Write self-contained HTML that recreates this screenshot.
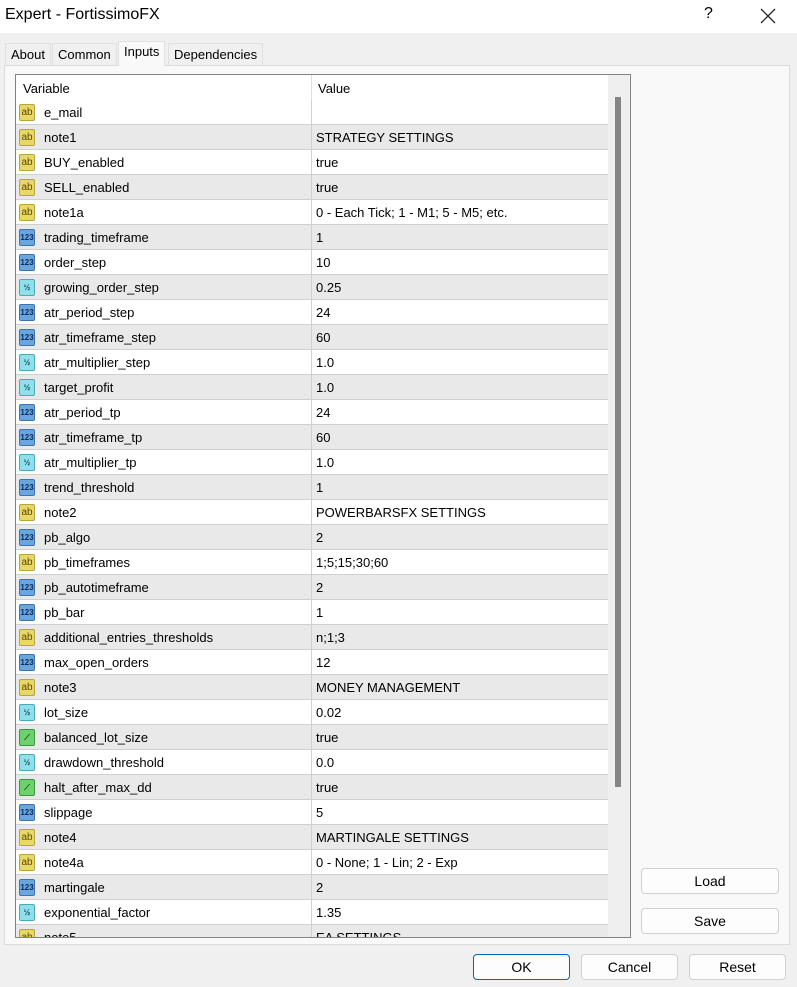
<!DOCTYPE html>
<html><head><meta charset="utf-8"><style>
*{box-sizing:border-box;margin:0;padding:0}
body{width:797px;height:987px;background:#f0f0f0;font-family:"Liberation Sans",Arial,sans-serif;position:relative;overflow:hidden;color:#000}
.title{position:absolute;left:0;top:0;width:797px;height:33px;background:#fff}
.title .t{position:absolute;left:5px;top:6px;font-size:16px}
.title .q{position:absolute;left:704px;top:5px;font-size:16px}
.title .x{position:absolute;left:760px;top:8px}
.tab{position:absolute;top:43px;height:22px;font-size:13px;padding:3px 5px;background:#f0f0f0;border:1px solid #e0e0e0;border-bottom:none}
.tab.a{top:41px;height:25px;background:#f9f9f9;padding-top:2px}
.panel{position:absolute;left:4px;top:65px;width:786px;height:880px;background:#f9f9f9;border:1px solid #dcdcdc}
.tbl{position:absolute;left:15px;top:74px;width:616px;height:864px;border:1px solid #828282;background:#fff;overflow:hidden}
.hdr{position:absolute;left:0;top:0;width:592px;height:25px;background:#fff;font-size:13px}
.hdr span{position:absolute;top:6px}
.row{position:absolute;left:0;width:592px;height:25px;border-bottom:1px solid #d0d0d0;font-size:13px}
.row.g{background:#e9e9e9}
.row .n{position:absolute;left:28px;top:5px}
.row .v{position:absolute;left:300px;top:5px}
.row .d{position:absolute;left:295px;top:0;height:25px;border-left:1px solid #d0d0d0}
.ic{position:absolute;left:3px;top:4px;width:16px;height:17px;border-radius:2px;font-size:8px;font-weight:bold;text-align:center;line-height:15px}
.ab{background:#e8d867;border:1px solid #b8a53a;color:#5a4a00;font-size:10px;font-weight:normal}
.n1{background:#6aa6de;border:1px solid #3b73b3;color:#0b2b5e}
.hf{background:#8fe0ea;border:1px solid #4aaabb;color:#134d5c}
.bo{background:#6fd06f;border:1px solid #3a9a3a;color:#0b4a0b}
.sb{position:absolute;left:592px;top:0;width:22px;height:864px;background:#efefef}
.th{position:absolute;left:7px;top:22px;width:6px;height:690px;background:#858585}
.btn{position:absolute;height:26px;border:1px solid #d0d0d0;border-radius:4px;background:#fdfdfd;font-size:14px;text-align:center;line-height:24px}
</style></head><body>
<div class="title"><span class="t">Expert - FortissimoFX</span><span class="q">?</span>
<svg class="x" width="16" height="16" viewBox="0 0 16 16"><path d="M1 1L15 15M15 1L1 15" stroke="#222" stroke-width="1.3"/></svg></div>
<div class="panel"></div>
<div class="tab" style="left:5px">About</div>
<div class="tab" style="left:52px">Common</div>
<div class="tab a" style="left:118px">Inputs</div>
<div class="tab" style="left:168px">Dependencies</div>
<div class="tbl">
<div class="hdr"><span style="left:7px">Variable</span><span style="left:302px">Value</span><div style="position:absolute;left:295px;top:0;height:25px;border-left:1px solid #e0e0e0"></div></div>
<div class="row" style="top:25px"><div class="ic ab">ab</div><span class="n">e_mail</span><div class="d"></div><span class="v"></span></div>
<div class="row g" style="top:50px"><div class="ic ab">ab</div><span class="n">note1</span><div class="d"></div><span class="v">STRATEGY SETTINGS</span></div>
<div class="row" style="top:75px"><div class="ic ab">ab</div><span class="n">BUY_enabled</span><div class="d"></div><span class="v">true</span></div>
<div class="row g" style="top:100px"><div class="ic ab">ab</div><span class="n">SELL_enabled</span><div class="d"></div><span class="v">true</span></div>
<div class="row" style="top:125px"><div class="ic ab">ab</div><span class="n">note1a</span><div class="d"></div><span class="v">0 - Each Tick; 1 - M1; 5 - M5; etc.</span></div>
<div class="row g" style="top:150px"><div class="ic n1">123</div><span class="n">trading_timeframe</span><div class="d"></div><span class="v">1</span></div>
<div class="row" style="top:175px"><div class="ic n1">123</div><span class="n">order_step</span><div class="d"></div><span class="v">10</span></div>
<div class="row g" style="top:200px"><div class="ic hf">½</div><span class="n">growing_order_step</span><div class="d"></div><span class="v">0.25</span></div>
<div class="row" style="top:225px"><div class="ic n1">123</div><span class="n">atr_period_step</span><div class="d"></div><span class="v">24</span></div>
<div class="row g" style="top:250px"><div class="ic n1">123</div><span class="n">atr_timeframe_step</span><div class="d"></div><span class="v">60</span></div>
<div class="row" style="top:275px"><div class="ic hf">½</div><span class="n">atr_multiplier_step</span><div class="d"></div><span class="v">1.0</span></div>
<div class="row g" style="top:300px"><div class="ic hf">½</div><span class="n">target_profit</span><div class="d"></div><span class="v">1.0</span></div>
<div class="row" style="top:325px"><div class="ic n1">123</div><span class="n">atr_period_tp</span><div class="d"></div><span class="v">24</span></div>
<div class="row g" style="top:350px"><div class="ic n1">123</div><span class="n">atr_timeframe_tp</span><div class="d"></div><span class="v">60</span></div>
<div class="row" style="top:375px"><div class="ic hf">½</div><span class="n">atr_multiplier_tp</span><div class="d"></div><span class="v">1.0</span></div>
<div class="row g" style="top:400px"><div class="ic n1">123</div><span class="n">trend_threshold</span><div class="d"></div><span class="v">1</span></div>
<div class="row" style="top:425px"><div class="ic ab">ab</div><span class="n">note2</span><div class="d"></div><span class="v">POWERBARSFX SETTINGS</span></div>
<div class="row g" style="top:450px"><div class="ic n1">123</div><span class="n">pb_algo</span><div class="d"></div><span class="v">2</span></div>
<div class="row" style="top:475px"><div class="ic ab">ab</div><span class="n">pb_timeframes</span><div class="d"></div><span class="v">1;5;15;30;60</span></div>
<div class="row g" style="top:500px"><div class="ic n1">123</div><span class="n">pb_autotimeframe</span><div class="d"></div><span class="v">2</span></div>
<div class="row" style="top:525px"><div class="ic n1">123</div><span class="n">pb_bar</span><div class="d"></div><span class="v">1</span></div>
<div class="row g" style="top:550px"><div class="ic ab">ab</div><span class="n">additional_entries_thresholds</span><div class="d"></div><span class="v">n;1;3</span></div>
<div class="row" style="top:575px"><div class="ic n1">123</div><span class="n">max_open_orders</span><div class="d"></div><span class="v">12</span></div>
<div class="row g" style="top:600px"><div class="ic ab">ab</div><span class="n">note3</span><div class="d"></div><span class="v">MONEY MANAGEMENT</span></div>
<div class="row" style="top:625px"><div class="ic hf">½</div><span class="n">lot_size</span><div class="d"></div><span class="v">0.02</span></div>
<div class="row g" style="top:650px"><div class="ic bo">⟋</div><span class="n">balanced_lot_size</span><div class="d"></div><span class="v">true</span></div>
<div class="row" style="top:675px"><div class="ic hf">½</div><span class="n">drawdown_threshold</span><div class="d"></div><span class="v">0.0</span></div>
<div class="row g" style="top:700px"><div class="ic bo">⟋</div><span class="n">halt_after_max_dd</span><div class="d"></div><span class="v">true</span></div>
<div class="row" style="top:725px"><div class="ic n1">123</div><span class="n">slippage</span><div class="d"></div><span class="v">5</span></div>
<div class="row g" style="top:750px"><div class="ic ab">ab</div><span class="n">note4</span><div class="d"></div><span class="v">MARTINGALE SETTINGS</span></div>
<div class="row" style="top:775px"><div class="ic ab">ab</div><span class="n">note4a</span><div class="d"></div><span class="v">0 - None; 1 - Lin; 2 - Exp</span></div>
<div class="row g" style="top:800px"><div class="ic n1">123</div><span class="n">martingale</span><div class="d"></div><span class="v">2</span></div>
<div class="row" style="top:825px"><div class="ic hf">½</div><span class="n">exponential_factor</span><div class="d"></div><span class="v">1.35</span></div>
<div class="row g" style="top:850px"><div class="ic ab">ab</div><span class="n">note5</span><div class="d"></div><span class="v">EA SETTINGS</span></div>
<div class="sb"><div class="th"></div></div>
</div>
<div class="btn" style="left:641px;top:868px;width:138px">Load</div>
<div class="btn" style="left:641px;top:908px;width:138px">Save</div>
<div class="btn" style="left:473px;top:954px;width:97px;border-color:#0067c0">OK</div>
<div class="btn" style="left:581px;top:954px;width:97px">Cancel</div>
<div class="btn" style="left:689px;top:954px;width:97px">Reset</div>
</body></html>
